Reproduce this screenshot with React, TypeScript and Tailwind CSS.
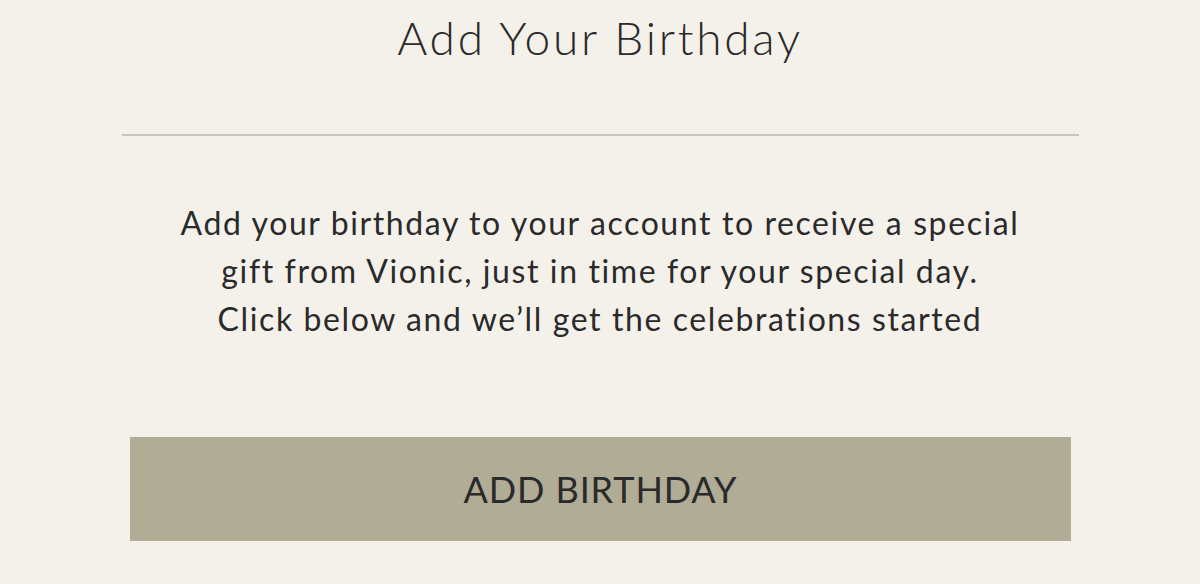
export default function App() {
  return (
    <div
      className="min-h-screen w-full bg-[#f4f1ea] text-[#2a2a2a]"
      style={{ fontFamily: 'Lato, "Noto Sans", sans-serif' }}
    >
      {/* Heading */}
      <h1 className="pt-[6px] text-center text-[46px] leading-[64px] font-light tracking-[0.06em]">
        Add Your Birthday
      </h1>

      {/* Divider */}
      <div className="mx-[122px] mt-[64px] h-[2px] w-[957px] bg-[#c6c5c1]" />

      {/* Message */}
      <p className="mt-[63px] text-center text-[32px] leading-[48px] font-normal tracking-[0.05em]">
        Add your birthday to your account to receive a special
        <br />
        gift from Vionic, just in time for your special day.
        <br />
        Click below and we’ll get the celebrations started
      </p>

      {/* Action */}
      <div className="mt-[94px] px-[130px]">
        <button className="flex h-[104px] w-[941px] items-center justify-center bg-[#b0ac95] text-[36px] font-normal tracking-wide text-[#2a2a2a]">
          ADD BIRTHDAY
        </button>
      </div>
    </div>
  );
}
